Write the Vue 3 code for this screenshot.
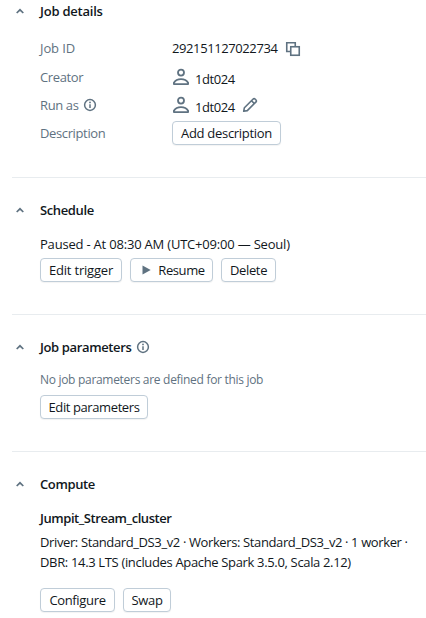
<script setup>
import { h } from 'vue'

const Chevron = () =>
  h('svg', { class: 'chevron', width: 16, height: 16, viewBox: '0 0 16 16' }, [
    h('path', { d: 'M4.7 10 8 6.8l3.3 3.2', fill: 'none', stroke: '#5f7281', 'stroke-width': 1.7 }),
  ])

const Info = () =>
  h('svg', { width: 14, height: 14, viewBox: '0 0 14 14' }, [
    h('circle', { cx: 7, cy: 7, r: 5.4, fill: 'none', stroke: '#5f7281', 'stroke-width': 1.5 }),
    h('path', { d: 'M7 6.2V10', stroke: '#5f7281', 'stroke-width': 1.5 }),
    h('circle', { cx: 7, cy: 4.4, r: 0.9, fill: '#5f7281' }),
  ])

const User = () =>
  h('svg', { width: 18, height: 18, viewBox: '0 0 18 18' }, [
    h('g', { fill: 'none', stroke: '#5f7281', 'stroke-width': 1.8, 'stroke-linejoin': 'round' }, [
      h('circle', { cx: 9, cy: 4.6, r: 3 }),
      h('path', { d: 'M1.9 16.100v-1.300C3.300 12.500 6 11.200 9 11.200s5.700 1.300 7.100 3.600v1.300z' }),
    ]),
  ])
</script>

<template>
  <main class="page">
    <section class="details">
      <header><Chevron /><h2 class="t-details">Job details</h2></header>
      <dl>
        <div class="row row-id">
          <dt class="l-id">Job ID</dt>
          <dd>
            <span class="number">292151127022734</span>
            <svg class="copy" width="16" height="16" viewBox="0 0 16 16">
              <g fill="none" stroke="#5f7281" stroke-width="1.6">
                <path d="M5.500 10.500H1.750V1.750h8.500V5" />
                <rect x="5.750" y="5.750" width="8.500" height="8.500" />
              </g>
            </svg>
          </dd>
        </div>
        <div class="row">
          <dt>Creator</dt>
          <dd><User /><span class="name">1dt024</span></dd>
        </div>
        <div class="row">
          <dt><span>Run as</span><Info /></dt>
          <dd>
            <User /><span class="name">1dt024</span>
            <svg class="pencil" width="16" height="16" viewBox="0 0 16 16">
              <g fill="none" stroke="#5f7281" stroke-width="1.6" stroke-linejoin="round">
                <path d="M1.700 14.300 2.400 10.700 10.900 2.200a1.700 1.700 0 0 1 2.400 0l.5.5a1.700 1.700 0 0 1 0 2.400l-8.500 8.500z" />
                <path d="m9.500 3.700 2.900 2.900" />
              </g>
            </svg>
          </dd>
        </div>
        <div class="row">
          <dt>Description</dt>
          <dd><button class="b-desc">Add description</button></dd>
        </div>
      </dl>
    </section>

    <section class="schedule">
      <header><Chevron /><h2>Schedule</h2></header>
      <p class="cron">Paused - At 08:30 AM (UTC+09:00 — Seoul)</p>
      <div class="actions">
        <button class="b-trigger">Edit trigger</button>
        <button class="b-resume">
          <svg width="9" height="10" viewBox="0 0 9 10"><path d="M.5.500 8.700 5 .5 9.500z" fill="#5f7281" /></svg>
          <span>Resume</span>
        </button>
        <button class="b-delete">Delete</button>
      </div>
    </section>

    <section class="params">
      <header><Chevron /><h2>Job parameters</h2><Info /></header>
      <p class="hint">No job parameters are defined for this job</p>
      <div class="actions"><button class="b-params">Edit parameters</button></div>
    </section>

    <section class="compute">
      <header><Chevron /><h2>Compute</h2></header>
      <h3>Jumpit_Stream_cluster</h3>
      <p class="spec spec-nodes">Driver: Standard_DS3_v2 · Workers: Standard_DS3_v2 · 1 worker ·</p>
      <p class="spec spec-runtime">DBR: 14.3 LTS (includes Apache Spark 3.5.0, Scala 2.12)</p>
      <div class="actions">
        <button class="b-configure">Configure</button>
        <button class="b-swap">Swap</button>
      </div>
    </section>
  </main>
</template>

<style>
body { background: #fff; }
</style>

<style scoped>
.page {
  box-sizing: border-box;
  height: 618px;
  padding-left: 12px;
  overflow: hidden;
  font: 13px/20px "Open Sans", "Noto Sans", sans-serif;
  letter-spacing: -0.37px;
  color: #11171c;
  white-space: nowrap;
}
section { box-sizing: border-box; height: 137px; padding-top: 22px; border-bottom: 1px solid #e8ecef; }
.details { height: 178px; padding-top: 1px; }
.compute { height: 166px; border-bottom: 0; }
header { display: flex; align-items: center; height: 20px; }
header .chevron { margin-right: 12px; }
header h2 + svg { margin-left: 5px; }
h2, h3 { margin: 0; font-size: 13px; line-height: 20px; font-weight: 600; }
.t-details { letter-spacing: -0.22px; }
svg { display: block; flex: none; }
p, dl, dd { margin: 0; }
dl { padding: 12px 0 0 28px; }
.row { display: flex; height: 28px; align-items: center; }
.row-id { height: 30px; padding-bottom: 1px; box-sizing: border-box; }
dt { display: flex; align-items: center; width: 132px; color: #5f7281; }
.l-id { letter-spacing: -0.1px; }
dt svg { margin-left: 4px; }
dd { display: flex; align-items: center; }
.number { letter-spacing: -0.4px; }
.copy { margin-left: 7px; margin-top: 2px; }
.name { padding-top: 3px; margin-left: 5px; letter-spacing: -0.45px; }
.pencil { margin-left: 7px; }
button {
  display: flex;
  align-items: center;
  justify-content: center;
  box-sizing: border-box;
  height: 24px;
  padding: 0;
  border: 1px solid #c0cdd8;
  border-radius: 4px;
  background: #fff;
  box-shadow: 0 1px 1px rgba(17, 23, 28, 0.05);
  font: inherit;
  letter-spacing: -0.34px;
  color: inherit;
  white-space: nowrap;
}
p, h3, .actions { margin-left: 28px; }
.actions { display: flex; gap: 8px; }
.cron, .hint { margin-top: 14px; }
.cron { letter-spacing: -0.2px; }
.cron + .actions { margin-top: 4px; }
.hint { font-size: 12px; letter-spacing: -0.3px; margin-top: 13px; color: #5f7281; }
.hint + .actions { margin-top: 5px; }
h3 { margin-top: 14px; letter-spacing: -0.44px; }
.spec-nodes { margin-top: 4px; letter-spacing: -0.38px; }
.spec-runtime { letter-spacing: -0.34px; }
.compute .actions { margin-top: 16px; }
.b-desc { width: 109px; letter-spacing: -0.3px; }
.b-trigger { width: 82px; letter-spacing: -0.2px; }
.b-resume { width: 83px; gap: 7px; letter-spacing: -0.4px; }
.b-resume svg { margin-left: 4px; }
.b-delete { width: 55px; }
.b-params { width: 108px; letter-spacing: -0.4px; }
.b-configure { width: 75px; }
.b-swap { width: 48px; }
</style>
